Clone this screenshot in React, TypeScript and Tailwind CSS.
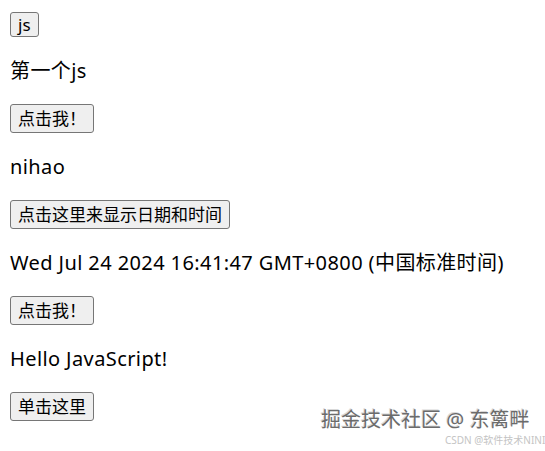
const font = { fontFamily: '"Noto Sans", "Noto Sans CJK SC", sans-serif' };

function Btn({ label, tall = true }: { label: string; tall?: boolean }) {
  return (
    <button
      className={`block ${tall ? "h-[29px]" : "h-[25px]"} px-[7px] border border-[#767676] rounded-[3px] bg-[#efefef] text-[17px] leading-none text-black`}
      style={font}
    >
      {label}
    </button>
  );
}

function Para({ text }: { text: string }) {
  return (
    <p className="my-[20px] h-[27px] text-[20px] leading-[27px] tracking-[0.4px] text-black whitespace-nowrap">
      {text}
    </p>
  );
}

export default function App() {
  return (
    <div className="relative w-[545px] h-[451px] bg-white overflow-hidden pt-[12px] pl-[10px]" style={font}>
      <Btn label="js" tall={false} />
      <Para text="第一个js" />
      <Btn label="点击我！" />
      <Para text="nihao" />
      <Btn label="点击这里来显示日期和时间" />
      <Para text="Wed Jul 24 2024 16:41:47 GMT+0800 (中国标准时间)" />
      <Btn label="点击我！" />
      <Para text="Hello JavaScript!" />
      <Btn label="单击这里" />

      {/* watermark */}
      <div className="absolute left-[321px] top-[410px] h-[20px] text-[20px] leading-[20px] text-[#6b6b6b] whitespace-nowrap [text-shadow:1px_1px_0_#ffffff,-1px_-1px_0_#d9d9d9]">
        掘金技术社区 @ 东篱畔
      </div>
      <div className="absolute left-[445px] top-[435px] text-[10px] leading-[11px] text-[#c4c4c4] whitespace-nowrap">
        CSDN @软件技术NINI
      </div>
    </div>
  );
}
